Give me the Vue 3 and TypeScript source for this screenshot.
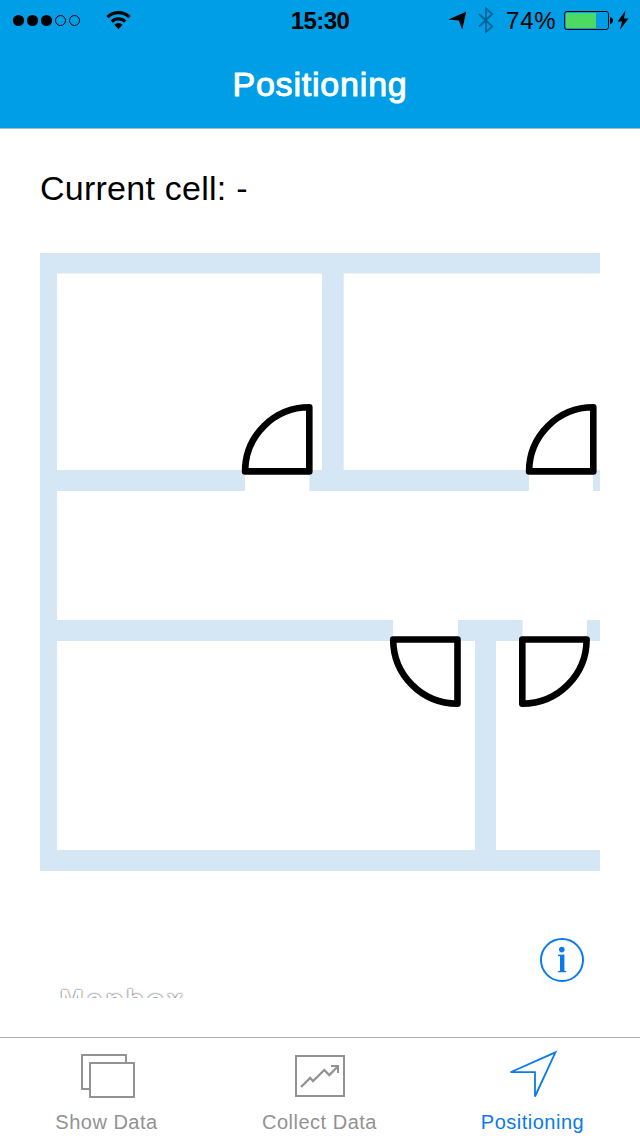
<script setup lang="ts">
interface Wall { x: number; y: number; w: number; h: number }

const signal: boolean[] = [true, true, true, false, false]

const walls: Wall[] = [
  { x: 40, y: 253, w: 560, h: 20.5 },
  { x: 40, y: 253, w: 17, h: 618 },
  { x: 40, y: 850, w: 560, h: 21 },
  { x: 322, y: 273, w: 21.7, h: 198 },
  { x: 57, y: 470, w: 188, h: 21 },
  { x: 309.5, y: 470, w: 219.5, h: 21 },
  { x: 593, y: 470, w: 7, h: 21 },
  { x: 57, y: 620, w: 336, h: 21 },
  { x: 458, y: 620, w: 64.5, h: 21 },
  { x: 587, y: 620, w: 13, h: 21 },
  { x: 475, y: 641, w: 21, h: 210 },
]

const doors: string[] = [
  'M309.3 471.4V407.3A64.2 64.2 0 0 0 245.1 471.4Z',
  'M593.3 471.4V407.3A64.2 64.2 0 0 0 529.1 471.4Z',
  'M457.5 639.5H393.2A64.2 64.2 0 0 0 457.5 703.7Z',
  'M522.3 639.5H586.6A64.2 64.2 0 0 1 522.3 703.7Z',
]
</script>

<template>
  <div class="screen">
    <header class="top">
      <div class="status">
        <svg class="status-left" width="140" height="40" viewBox="0 0 140 40">
          <circle
            v-for="(on, i) in signal"
            :key="i"
            :cx="18.5 + i * 14"
            cy="20.5"
            :r="on ? 5.6 : 5"
            :fill="on ? '#000' : 'none'"
            :stroke="on ? 'none' : '#000'"
            stroke-width="1"
          />
          <g fill="none" stroke="#000" stroke-width="3.2">
            <path d="M107.5 17.2A15.5 15.5 0 0 1 129.5 17.2" />
            <path d="M111.8 21.6A9.4 9.4 0 0 1 125.2 21.6" />
          </g>
          <path d="M114.4 24.8A5.8 5.8 0 0 1 122.6 24.8L118.5 29.2Z" />
        </svg>
        <span class="time">15:30</span>
        <div class="status-right">
          <svg width="50" height="40" viewBox="448 0 50 40">
            <path d="M466.2 11.8L462.2 29.6L458.8 20.6L448.3 19.6Z" />
            <path d="M479 14L492.3 26.5L486 32V8.5L492.3 14L479 26.5" fill="none" stroke="#006497" stroke-width="1.8" />
          </svg>
          <span class="percent">74%</span>
          <svg width="66" height="40" viewBox="563 0 66 40">
            <rect x="564.5" y="11.5" width="44" height="18" rx="2.5" fill="none" stroke="#000" />
            <rect x="566" y="13" width="30" height="15" fill="#4cd964" />
            <path d="M610 17.2Q613 17.5 613 20.5T610 23.8Z" />
            <path d="M625.6 10.5L617.6 21.4H622L620 29.8L628.5 18.6H624Z" />
          </svg>
        </div>
      </div>
      <h1 class="title">Positioning</h1>
    </header>

    <main class="content">
      <p class="cell">Current cell: -</p>
      <section class="map">
        <svg class="plan" width="560" height="620" viewBox="40 252 560 620">
          <rect v-for="(w, i) in walls" :key="i" :x="w.x" :y="w.y" :width="w.w" :height="w.h" fill="#d5e6f4" />
          <path v-for="d in doors" :key="d" :d="d" fill="#fff" stroke="#000" stroke-width="6.6" stroke-linejoin="round" />
        </svg>
        <div class="map-footer">
          <span class="brand">Mapbox</span>
          <svg class="info" width="46" height="46" viewBox="539 937 46 46">
            <circle cx="562" cy="960" r="21" fill="none" stroke="#0a7aeb" stroke-width="2" />
            <circle cx="561.8" cy="949.6" r="2.8" fill="#0a7aeb" />
            <path d="M558 954.8L564.4 954.4V970.8L566.2 971.2V972.3H557.8V971.2L560 970.8V956.2L558 955.9Z" fill="#0a7aeb" />
          </svg>
        </div>
      </section>
    </main>

    <nav class="tabs">
      <div class="tab">
        <svg width="60" height="50" viewBox="77 1050 60 50" fill="#fff" stroke="#929292" stroke-width="2">
          <rect x="82" y="1055" width="44" height="34" />
          <rect x="90" y="1063" width="44" height="34" />
        </svg>
        <span>Show Data</span>
      </div>
      <div class="tab">
        <svg width="60" height="50" viewBox="290 1050 60 50" fill="none" stroke="#929292" stroke-width="2">
          <rect x="296" y="1056" width="48" height="40" />
          <path d="M301 1087L310.2 1078L313 1081L324.3 1070L329.3 1075L338 1066.3" stroke-width="2.3" />
          <path d="M331 1066H338V1073" />
        </svg>
        <span>Collect Data</span>
      </div>
      <div class="tab active">
        <svg width="60" height="50" viewBox="503 1050 60 50" fill="none" stroke="#0a7aeb" stroke-width="1.8">
          <path d="M555.4 1052.4L535 1096.5V1072.2H510.5Z" />
        </svg>
        <span>Positioning</span>
      </div>
    </nav>
  </div>
</template>

<style>
body {
  margin: 0;
  background: #fff;
}
</style>

<style scoped>
.screen {
  width: 640px;
  height: 1136px;
  display: flex;
  flex-direction: column;
  overflow: hidden;
  background: #fff;
  color: #000;
  font-family: "Liberation Sans", Arial, sans-serif;
}
.top {
  box-sizing: border-box;
  height: 129px;
  background: #009ee6;
  border-bottom: 1px solid #a6bfca;
}
.status {
  height: 40px;
  display: grid;
  grid-template-columns: 1fr auto 1fr;
}
.status svg {
  display: block;
}
.time {
  font-size: 24px;
  font-weight: 700;
  line-height: 42px;
  letter-spacing: -0.6px;
}
.status-right {
  display: flex;
  justify-content: flex-end;
  padding-right: 11px;
}
.percent {
  width: 65px;
  box-sizing: border-box;
  padding-left: 8px;
  font-size: 24px;
  line-height: 42px;
  letter-spacing: 0.8px;
  white-space: nowrap;
}
.title {
  margin: 0;
  padding-top: 24px;
  text-align: center;
  color: #fff;
  font-size: 34px;
  font-weight: 400;
  line-height: 40px;
  letter-spacing: 0.8px;
  -webkit-text-stroke: 1px #fff;
}
.content {
  height: 869px;
  padding: 0 40px;
}
.cell {
  margin: 0;
  padding-top: 39px;
  height: 84px;
  font-size: 34px;
  line-height: 40px;
  letter-spacing: 0.25px;
}
.map {
  height: 746px;
  overflow: hidden;
}
.plan {
  display: block;
}
.map-footer {
  display: flex;
  justify-content: space-between;
  padding: 65px 15px 0 20px;
}
.brand {
  padding-top: 48px;
  font-size: 28px;
  line-height: 30px;
  font-weight: 700;
  letter-spacing: 3.4px;
  color: #fff;
  text-shadow: 0 0 2px #555, 0 0 2px #888;
}
.info {
  display: block;
}
.tabs {
  box-sizing: border-box;
  margin-top: 39px;
  height: 99px;
  flex: none;
  border-top: 1px solid #b2b2b2;
  display: grid;
  grid-template-columns: 213px 213px 213px;
}
.tab {
  display: flex;
  flex-direction: column;
  align-items: center;
  padding-top: 12px;
  color: #929292;
  font-size: 20px;
  line-height: 24px;
  letter-spacing: 0.5px;
}
.tab svg {
  flex: none;
}
.tab span {
  margin-top: 10px;
}
.active {
  color: #0a7aeb;
}
</style>
